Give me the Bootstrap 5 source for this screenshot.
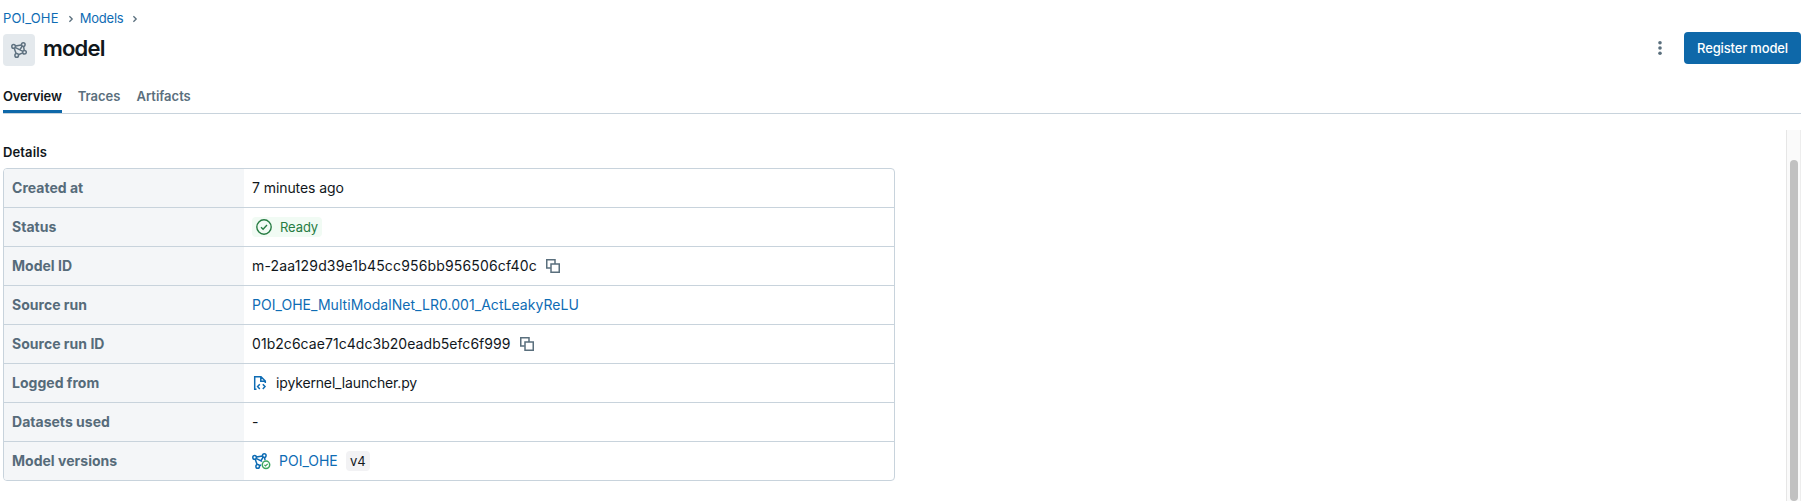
<!DOCTYPE html>
<html lang="en">
<head>
<meta charset="utf-8">
<title>model</title>
<link href="https://cdn.jsdelivr.net/npm/bootstrap@5.3.0/dist/css/bootstrap.min.css" rel="stylesheet">
<style>
body{font-family:Inter,"Liberation Sans",sans-serif;font-size:14px;line-height:20px;color:#11171c;height:501px;overflow:hidden}
a{color:#0e6cb4;text-decoration:none}
svg{display:block;flex:none}
.page{height:501px;padding:0 3px}
.crumbs{height:20px;margin-top:8px;font-size:13px;gap:8px}
.crumbs svg,.muted-icon{color:#5a6f7d}
.crumbs svg{margin-top:2px}
.crumbs a:first-child{letter-spacing:.15px}
.crumbs a:nth-of-type(2){letter-spacing:-.2px;margin-left:-3px}
.crumbs a:nth-of-type(2)+svg{margin-left:-1px}
.head{height:32px;margin-top:4px}
.tile{width:32px;height:32px;background:#e4e9ed;color:#5f7281;margin-top:2px}
.title-text{font-size:22px;font-weight:600;line-height:28px;letter-spacing:-.8px;margin:0 0 0 8px}
.btn-register{width:117px;height:32px;background:#0e68a9;color:#fff;font-size:13px;font-weight:500;letter-spacing:-.15px;border-radius:4px;padding:1px 0 0;border:0}
.tab-row{height:30px;margin-top:20px;border-bottom:1px solid #c8d3dc;font-size:13px;font-weight:600;gap:16px}
.tab-row .nav-link{padding:2px 0 0;color:#5a6f7d;height:29px;line-height:20px;white-space:nowrap}
.tab-row .nav-link.active{color:#11171c;border-bottom:3px solid #0e68a9;letter-spacing:-.15px}
.body-area{margin-top:16px;min-height:0}
.section-title{font-size:13px;font-weight:600;line-height:20px;letter-spacing:.12px;margin:12px 0 6px}
.details{width:892px;border:1px solid #c8d3dc;border-radius:4px;overflow:hidden}
.line{height:39px;border-bottom:1px solid #c8d3dc}
.line:last-child{height:38px;border-bottom:0}
.line dt{width:240px;background:#f4f6f8;color:#566b7a;font-weight:700;letter-spacing:.02px;padding-left:8px;margin:0;align-self:stretch;line-height:38px}
.line dd{margin:0;padding-left:8px}
.copyable{gap:8px}
.ls-model{letter-spacing:.16px}
.ls-run{letter-spacing:.05px}
.ls-link{letter-spacing:.04px}
.ls-ago{letter-spacing:-.08px}
.ls-file{letter-spacing:-.15px}
.ready{width:70px;height:20px;background:#f1fbf4;color:#277c43;border-radius:4px;font-size:13px;letter-spacing:-.1px;padding-left:4px;gap:8px}
.ver{height:20px;width:24px;background:#f2f2f4;border-radius:4px;font-size:13px;margin-left:8px}
.track{width:15px;background:#fafafa;border-left:1px solid #e6e6e6;border-right:1px solid #ededed;padding:30px 3px 0}
.thumb{background:#c1c1c1;width:8px;height:100%;border-radius:4px}
</style>
</head>
<body>
<svg width="0" height="0" class="position-absolute">
<symbol id="graph" viewBox="0 0 16 16"><g fill="none" stroke="currentColor" stroke-width="1.5"><circle cx="2.6" cy="4.4" r="1.8"/><circle cx="12.3" cy="2.6" r="1.8"/><circle cx="5.7" cy="13.4" r="1.8"/><circle cx="13.5" cy="10.2" r="1.8"/><path d="M4.4 4.1 10.5 2.9M3.2 6.2 5.1 11.6M4.1 5.4 11.9 9.3M12.6 4.4 13.2 8.4M7.4 12.7 11.8 10.9M11.2 4 9 7.6"/></g></symbol>
<symbol id="copy" viewBox="0 0 16 16"><path fill="none" stroke="currentColor" stroke-width="1.5" d="M5.2 10H1.75V1.75H10V5.2M6 6h8.25v8.25H6z"/></symbol>
<symbol id="chev" viewBox="0 0 8 10"><path fill="none" stroke="currentColor" stroke-width="1.3" d="M2.4 2.2 5.2 5 2.4 7.8"/></symbol>
</svg>
<main class="page d-flex flex-column">
<nav class="crumbs d-flex align-items-center"><a href="#">POI_OHE</a><svg width="8" height="10"><use href="#chev"/></svg><a href="#">Models</a><svg width="8" height="10"><use href="#chev"/></svg></nav>
<header class="head d-flex align-items-center">
<span class="tile rounded-1 d-flex align-items-center justify-content-center align-self-start"><svg width="16" height="16"><use href="#graph"/></svg></span>
<h1 class="title-text">model</h1>
<svg class="ms-auto me-3" width="16" height="16" fill="#5a6f7d"><circle cx="8" cy="2.7" r="1.8"/><circle cx="8" cy="8" r="1.8"/><circle cx="8" cy="13.3" r="1.8"/></svg>
<button class="btn btn-register">Register model</button>
</header>
<nav class="tab-row nav flex-nowrap"><a class="nav-link active" href="#">Overview</a><a class="nav-link" href="#">Traces</a><a class="nav-link" href="#">Artifacts</a></nav>
<div class="body-area d-flex flex-fill justify-content-between">
<section>
<h2 class="section-title">Details</h2>
<dl class="details mb-0">
<div class="line d-flex align-items-center"><dt>Created at</dt><dd class="ls-ago">7 minutes ago</dd></div>
<div class="line d-flex align-items-center"><dt>Status</dt><dd><span class="ready d-flex align-items-center"><svg width="16" height="16" fill="none" stroke="currentColor" stroke-width="1.4"><circle cx="8" cy="8" r="7.2"/><path d="M5 8.2 7.1 10.2 11 6.1"/></svg>Ready</span></dd></div>
<div class="line d-flex align-items-center"><dt>Model ID</dt><dd class="copyable d-flex align-items-center"><span class="ls-model">m-2aa129d39e1b45cc956bb956506cf40c</span><svg class="muted-icon" width="16" height="16"><use href="#copy"/></svg></dd></div>
<div class="line d-flex align-items-center"><dt>Source run</dt><dd class="ls-link"><a href="#">POI_OHE_MultiModalNet_LR0.001_ActLeakyReLU</a></dd></div>
<div class="line d-flex align-items-center"><dt>Source run ID</dt><dd class="copyable d-flex align-items-center"><span class="ls-run">01b2c6cae71c4dc3b20eadb5efc6f999</span><svg class="muted-icon" width="16" height="16"><use href="#copy"/></svg></dd></div>
<div class="line d-flex align-items-center"><dt>Logged from</dt><dd class="ls-file d-flex align-items-center gap-2"><svg width="16" height="16" fill="none" stroke="#0e6cb4" stroke-width="1.5"><path d="M4.5 14.3H2.7V1.7H9L13.3 6V8M8.8 1.8V6.2H13.2M7.8 9.2 5.6 11.6 7.8 14M10.8 9.2 13 11.6 10.8 14"/></svg>ipykernel_launcher.py</dd></div>
<div class="line d-flex align-items-center"><dt>Datasets used</dt><dd>-</dd></div>
<div class="line d-flex align-items-center"><dt>Model versions</dt><dd class="d-flex align-items-center"><svg width="19" height="17" viewBox="0 0 19 17" style="color:#0e6cb4"><use href="#graph" width="16" height="16"/><circle cx="14" cy="11.8" r="4.9" fill="#fff"/><circle cx="14" cy="11.8" r="3.7" fill="none" stroke="#3ba65e" stroke-width="1.5"/><path d="M12.4 11.9 13.5 13 15.7 10.8" fill="none" stroke="#3ba65e" stroke-width="1.2"/></svg><a class="ms-2" href="#">POI_OHE</a><span class="ver d-flex align-items-center justify-content-center">v4</span></dd></div>
</dl>
</section>
<div class="track"><div class="thumb"></div></div>
</div>
</main>
<script src="https://cdn.jsdelivr.net/npm/bootstrap@5.3.0/dist/js/bootstrap.bundle.min.js"></script>
</body>
</html>
